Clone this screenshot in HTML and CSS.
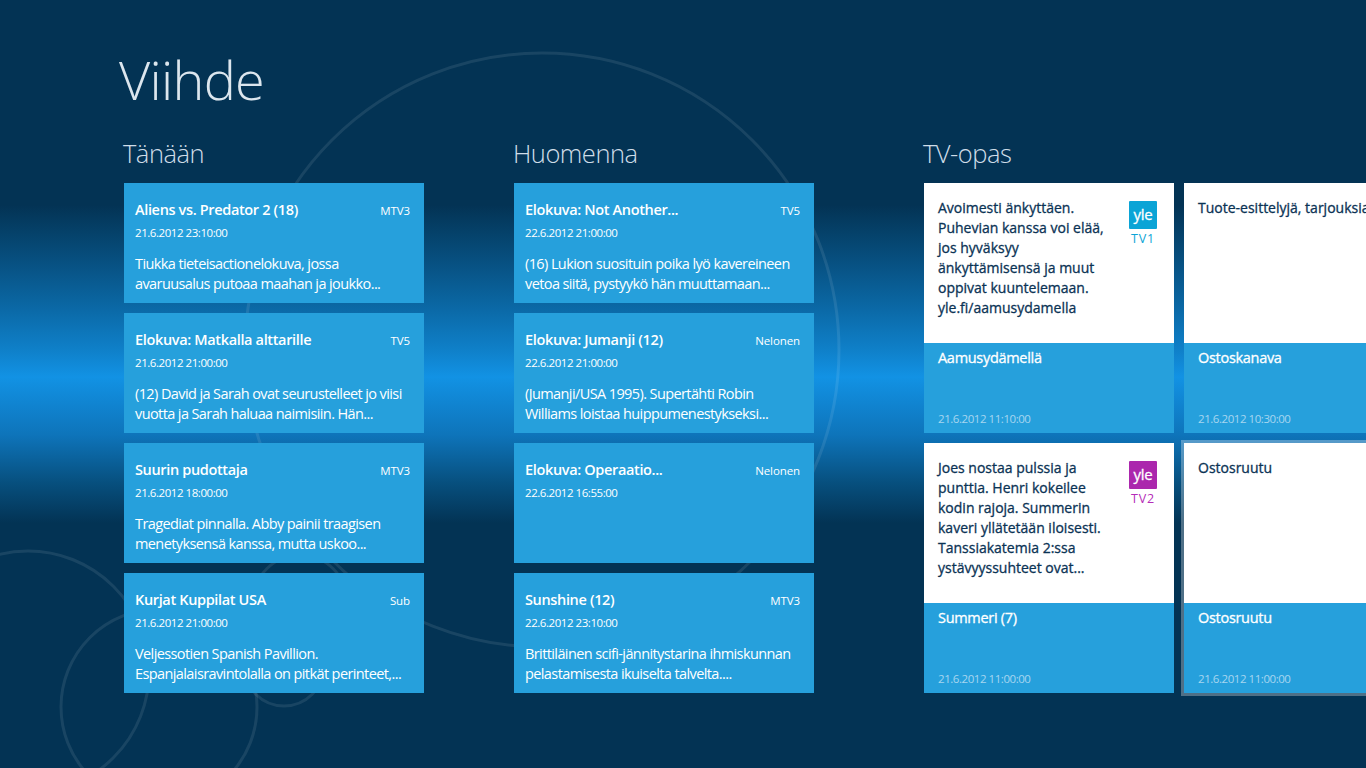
FILE: index.html
```html
<!DOCTYPE html>
<html lang="fi">
<head>
<meta charset="utf-8">
<title>Viihde</title>
<link rel="stylesheet" href="styles.css">
</head>
<body>
<svg class="bg-art" width="1366" height="768" viewBox="0 0 1366 768" aria-hidden="true">
  <circle cx="542" cy="350" r="297"/>
  <circle cx="28" cy="672" r="121"/>
  <circle cx="159" cy="707" r="98"/>
  <circle cx="284" cy="666" r="40"/>
  <circle cx="300" cy="602" r="47"/>
</svg>
<main class="page">
  <h1 class="title">Viihde</h1>
  <div class="groups">
    <section class="group group-today">
      <h2 class="group-title">Tänään</h2>
      <div class="list">
        <article class="card"><div class="card-head"><h3>Aliens vs. Predator 2 (18)</h3><span class="chan">MTV3</span></div><p class="when">21.6.2012 23:10:00</p><p class="desc">Tiukka tieteisactionelokuva, jossa avaruusalus putoaa maahan ja joukko...</p></article>
        <article class="card"><div class="card-head"><h3>Elokuva: Matkalla alttarille</h3><span class="chan">TV5</span></div><p class="when">21.6.2012 21:00:00</p><p class="desc">(12) David ja Sarah ovat seurustelleet jo viisi vuotta ja Sarah haluaa naimisiin. Hän...</p></article>
        <article class="card"><div class="card-head"><h3>Suurin pudottaja</h3><span class="chan">MTV3</span></div><p class="when">21.6.2012 18:00:00</p><p class="desc">Tragediat pinnalla. Abby painii traagisen menetyksensä kanssa, mutta uskoo...</p></article>
        <article class="card"><div class="card-head"><h3>Kurjat Kuppilat USA</h3><span class="chan">Sub</span></div><p class="when">21.6.2012 21:00:00</p><p class="desc">Veljessotien Spanish Pavillion. Espanjalaisravintolalla on pitkät perinteet,...</p></article>
      </div>
    </section>
    <section class="group group-tomorrow">
      <h2 class="group-title">Huomenna</h2>
      <div class="list">
        <article class="card"><div class="card-head"><h3>Elokuva: Not Another...</h3><span class="chan">TV5</span></div><p class="when">22.6.2012 21:00:00</p><p class="desc">(16) Lukion suosituin poika lyö kavereineen vetoa siitä, pystyykö hän muuttamaan...</p></article>
        <article class="card"><div class="card-head"><h3>Elokuva: Jumanji (12)</h3><span class="chan">Nelonen</span></div><p class="when">22.6.2012 21:00:00</p><p class="desc">(Jumanji/USA 1995). Supertähti Robin Williams loistaa huippumenestykseksi...</p></article>
        <article class="card"><div class="card-head"><h3>Elokuva: Operaatio...</h3><span class="chan">Nelonen</span></div><p class="when">22.6.2012 16:55:00</p></article>
        <article class="card"><div class="card-head"><h3>Sunshine (12)</h3><span class="chan">MTV3</span></div><p class="when">22.6.2012 23:10:00</p><p class="desc">Brittiläinen scifi-jännitystarina ihmiskunnan pelastamisesta ikuiselta talvelta....</p></article>
      </div>
    </section>
    <section class="group group-guide">
      <h2 class="group-title">TV-opas</h2>
      <div class="tiles">
        <article class="tile">
          <div class="tile-top"><p class="tile-text">Avoimesti änkyttäen. Puhevian kanssa voi elää, jos hyväksyy änkyttämisensä ja muut oppivat kuuntelemaan. yle.fi/aamusydamella</p>
            <div class="logo logo-tv1"><span class="yle">yle</span><span class="logo-chan">TV1</span></div></div>
          <div class="tile-bottom"><h3>Aamusydämellä</h3><span class="tile-when">21.6.2012 11:10:00</span></div>
        </article>
        <article class="tile">
          <div class="tile-top"><p class="tile-text tile-nowrap">Tuote-esittelyjä, tarjouksia ja asiakaspalvelua</p></div>
          <div class="tile-bottom"><h3>Ostoskanava</h3><span class="tile-when">21.6.2012 10:30:00</span></div>
        </article>
        <article class="tile">
          <div class="tile-top"><p class="tile-text">Joes nostaa pulssia ja punttia. Henri kokeilee kodin rajoja. Summerin kaveri yllätetään iloisesti. Tanssiakatemia 2:ssa ystävyyssuhteet ovat...</p>
            <div class="logo logo-tv2"><span class="yle">yle</span><span class="logo-chan">TV2</span></div></div>
          <div class="tile-bottom"><h3>Summeri (7)</h3><span class="tile-when">21.6.2012 11:00:00</span></div>
        </article>
        <article class="tile tile-focus">
          <div class="tile-top"><p class="tile-text">Ostosruutu</p></div>
          <div class="tile-bottom"><h3>Ostosruutu</h3><span class="tile-when">21.6.2012 11:00:00</span></div>
        </article>
      </div>
    </section>
  </div>
</main>
</body>
</html>
```
FILE: styles.css
```css
* { box-sizing: border-box; }
html, body { margin: 0; padding: 0; height: 768px; overflow: hidden; }
body {
  position: relative;
  width: 1366px;
  font-family: "Open Sans", "Noto Sans", sans-serif;
  color: #fff;
  background: linear-gradient(180deg, #033354 0, #033354 205px, #0a649f 300px, #0f80c9 350px, #1292e4 377px, #0e74ba 435px, #07507f 482px, #033354 523px, #033354 100%);
}
.bg-art { position: absolute; left: 0; top: 0; }
.bg-art circle { fill: none; stroke: #fff; stroke-opacity: .09; stroke-width: 3; }
.page { position: relative; padding: 41px 0 0 119px; width: 1366px; height: 768px; overflow: hidden; }
h1, h2, h3, p { margin: 0; font-weight: 400; }
.title { font-size: 54px; line-height: 76px; font-weight: 300; letter-spacing: -.7px; color: #dce6ee; }
.groups { display: flex; padding-left: 5px; margin-top: 12px; }
.group { flex: none; }
.group-title { font-size: 25.5px; line-height: 48px; font-weight: 300; letter-spacing: -.5px; color: #cfdde8; height: 54px; margin-left: -1px; }
.group-today { width: 300px; margin-right: 90px; }
.group-tomorrow { width: 300px; margin-right: 110px; }
.group-guide { width: 520px; }
.list { display: flex; flex-direction: column; gap: 10px; }
.card { height: 120px; background: #26a0dc; padding: 17px 14px 0 11px; }
.card-head { display: flex; justify-content: space-between; align-items: baseline; }
.card h3, .tile-bottom h3 { font-size: 14.5px; line-height: 20px; font-weight: 600; letter-spacing: -.35px; white-space: nowrap; }
.chan { font-size: 11.5px; letter-spacing: -.1px; }
.when { font-size: 11.5px; line-height: 16px; margin-top: 5px; letter-spacing: -.45px; }
.desc { font-size: 14.5px; line-height: 20px; margin-top: 13px; letter-spacing: -.6px; }
.tiles { display: grid; grid-template-columns: 250px 250px; grid-auto-rows: 250px; gap: 10px; }
.tile { position: relative; display: flex; flex-direction: column; height: 250px; }
.tile-top { height: 160px; background: #fff; color: #0b3355; padding: 15px 14px 0 14px; display: flex; justify-content: space-between; }
.tile-text { font-size: 14px; line-height: 20px; letter-spacing: 0; width: 176px; font-weight: 400; -webkit-text-stroke: .3px #0b3355; }
.tile-nowrap { white-space: nowrap; width: auto; }
.tile-bottom { height: 90px; background: #26a0dc; padding: 5px 14px 6px; display: flex; flex-direction: column; justify-content: space-between; }
.tile-bottom h3 { font-weight: 400; letter-spacing: -.3px; -webkit-text-stroke: .3px #fff; }
.tile-when { font-size: 11.5px; line-height: 16px; letter-spacing: -.45px; color: #a6d6f0; }
.tile-focus { outline: 3px solid rgba(255,255,255,.3); }
.logo { width: 28px; margin-right: 3px; margin-top: 3px; flex: none; display: flex; flex-direction: column; align-items: center; }
.yle { width: 28px; height: 28px; border-radius: 1px; color: #fff; font-size: 15px; line-height: 26px; text-align: center; font-weight: 400; letter-spacing: -.2px; -webkit-text-stroke: .3px #fff; }
.logo-chan { font-size: 12.5px; line-height: 16px; margin-top: 2px; letter-spacing: .8px; }
.logo-tv1 .yle { background: #0ba4d6; }
.logo-tv1 .logo-chan { color: #0ba4d6; }
.logo-tv2 .yle { background: #ab27ad; }
.logo-tv2 .logo-chan { color: #b52cb8; }
```
